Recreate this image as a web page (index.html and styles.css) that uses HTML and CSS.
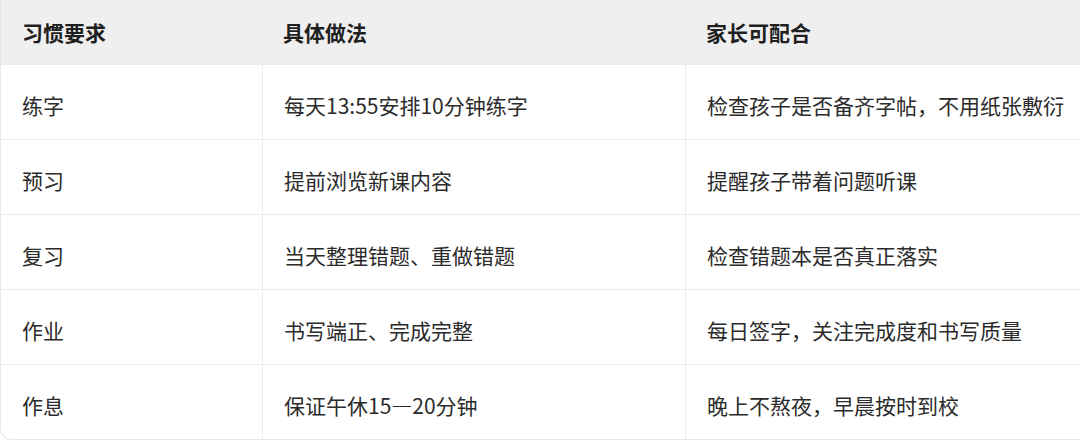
FILE: index.html
```html
<!DOCTYPE html>
<html lang="zh">
<head>
<meta charset="utf-8">
<link rel="stylesheet" href="styles.css">
</head>
<body>
<div class="table">
  <div class="row head">
    <div class="cell">习惯要求</div>
    <div class="cell">具体做法</div>
    <div class="cell">家长可配合</div>
  </div>
  <div class="row">
    <div class="cell">练字</div>
    <div class="cell">每天13:55安排10分钟练字</div>
    <div class="cell">检查孩子是否备齐字帖，不用纸张敷衍</div>
  </div>
  <div class="row">
    <div class="cell">预习</div>
    <div class="cell">提前浏览新课内容</div>
    <div class="cell">提醒孩子带着问题听课</div>
  </div>
  <div class="row">
    <div class="cell">复习</div>
    <div class="cell">当天整理错题、重做错题</div>
    <div class="cell">检查错题本是否真正落实</div>
  </div>
  <div class="row">
    <div class="cell">作业</div>
    <div class="cell">书写端正、完成完整</div>
    <div class="cell">每日签字，关注完成度和书写质量</div>
  </div>
  <div class="row">
    <div class="cell">作息</div>
    <div class="cell">保证午休15—20分钟</div>
    <div class="cell">晚上不熬夜，早晨按时到校</div>
  </div>
</div>
</body>
</html>
```

FILE: styles.css
```css
html, body {
  margin: 0;
  padding: 0;
  background: #ffffff;
}
body {
  width: 1080px;
  height: 447px;
  overflow: hidden;
  font-family: "Noto Sans CJK SC", "Noto Sans", sans-serif;
}
.table {
  width: 1100px;
  border-left: 1px solid #e6e6e6;
  border-bottom: 1px solid #e6e6e6;
  border-radius: 0 0 0 12px;
  overflow: hidden;
  box-sizing: border-box;
}
.row {
  display: grid;
  grid-template-columns: 261px 423px 1fr;
  height: 75px;
  border-top: 1px solid #ebebeb;
  box-sizing: border-box;
}
.row.head {
  height: 64px;
  background: #efefef;
  border-top: none;
  margin-left: -1px;
  grid-template-columns: 262px 423px 1fr;
}
.cell {
  display: flex;
  align-items: center;
  padding: 6px 0 0 21px;
  font-size: 21px;
  color: #2b2b2b;
  box-sizing: border-box;
}
.row:not(.head) .cell + .cell {
  border-left: 1px solid #ebebeb;
}
.head .cell {
  font-weight: bold;
  color: #1f1f1f;
  padding-top: 0;
}
.head .cell:first-child {
  padding-left: 22px;
}
```
